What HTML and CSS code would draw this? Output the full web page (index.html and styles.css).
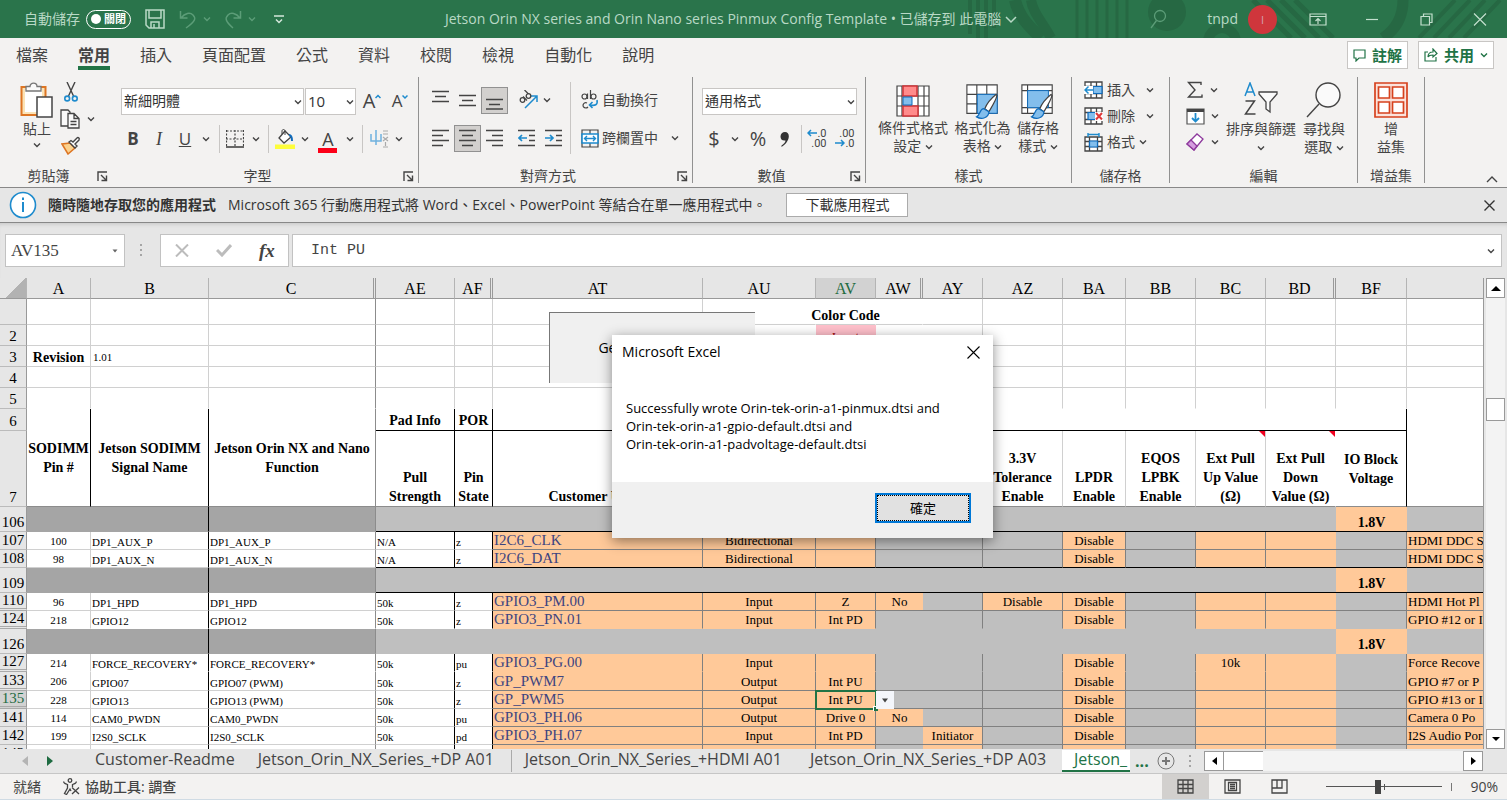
FILE: index.html
```html
<!DOCTYPE html>
<html lang="zh-Hant">
<head>
  <meta charset="UTF-8" />
  <meta name="viewport" content="width=device-width, initial-scale=1.0"/>
  <title>Jetson Orin NX series and Orin Nano series Pinmux Config Template</title>
  <link rel="stylesheet" href="styles.css">
</head>
<body>

<svg class="sprite" aria-hidden="true">
  <symbol id="chev" viewBox="0 0 8 8"><path d="M1 2.5l3 3 3-3" fill="none" stroke="currentColor" stroke-width="1.4"/></symbol>
  <symbol id="launch" viewBox="0 0 11 11"><path d="M1 10V1h9M4 4l5 5M9.5 4.500v5h-5" fill="none" stroke="#444" stroke-width="1.4"/></symbol>
  <symbol id="brush" viewBox="0 0 22 26"><path d="M20 1C15 5 11 10 9 15l4 3C16 13 20 7 21 2z" fill="#fff" stroke="#444" stroke-width="1.2"/><path d="M8 15c-4 0-3 6-7 8 5 3 12 1 12-5z" fill="#83beec" stroke="#0f6cbd" stroke-width="1.2"/></symbol>
</svg>

<header class="titlebar">
  <svg class="deco" width="542" height="38" viewBox="0 0 542 38" aria-hidden="true">
    <g fill="none" stroke="#266843">
      <path d="M5 0v34M13 0v38M21 0v38M29 0v28" stroke-width="4"/>
      <path d="M50 0c4 18 16 28 26 38" stroke-width="12"/>
      <path d="M66 0c2 14 12 22 20 38" stroke-width="10"/>
      <path d="M112 0v38M122 0v38M132 0v38M142 0v38M152 0v38M162 0v38" stroke-width="3"/>
      <circle cx="257" cy="42" r="14" stroke-width="10"/>
      <path d="M288 0l38 38M302 0l38 38M316 0l38 38M330 0l38 38" stroke-width="5"/>
      <path d="M438 0c0 18-8 30-20 38" stroke-width="11"/>
      <path d="M490 0l-36 38M505 0l-36 38M520 0l-36 38M535 0l-36 38" stroke-width="4"/>
    </g>
    <circle cx="202" cy="12" r="19" fill="#266843"/>
  </svg>
  <span class="autosave-label">自動儲存</span>
  <button class="autosave" role="switch" aria-checked="false"><i></i>關閉</button>
  <button class="tb save" aria-label="儲存"><svg width="20" height="20" viewBox="0 0 20 20" fill="none" stroke="#b9d9c6" stroke-width="1.5"><path d="M1 1h18v18H4l-3-3zM4 1v8h12V1M6 19v-6h8v6M9 15v4"/></svg></button>
  <button class="tb undo" aria-label="復原"><svg width="18" height="19" viewBox="0 0 18 19" fill="none" stroke="#5c9d78" stroke-width="1.5"><path d="M1.500 1v7h7M2 8c4-5 9-6 12-3s3 6-7 13"/></svg><svg class="chev"><use href="#chev"/></svg></button>
  <button class="tb redo" aria-label="重做"><svg width="18" height="19" viewBox="0 0 18 19" fill="none" stroke="#5c9d78" stroke-width="1.5"><path d="M16.500 1v7h-7M16 8c-4-5-9-6-12-3s-3 6 5 13"/></svg><svg class="chev"><use href="#chev"/></svg></button>
  <button class="tb" aria-label="自訂"><svg width="10" height="9" viewBox="0 0 10 9" fill="none" stroke="#d5e8dc" stroke-width="1.500"><path d="M0 1h10M2 4.500l3 3 3-3"/></svg></button>
  <h1>Jetson Orin NX series and Orin Nano series Pinmux Config Template • 已儲存到 此電腦 <svg width="12" height="8" viewBox="0 0 12 8" fill="none" stroke="#b9d9c6" stroke-width="1.5"><path d="M1 1l5 5 5-5"/></svg></h1>
  <div class="account">
    <svg class="search" width="17" height="21" viewBox="0 0 17 21" fill="none" stroke="#5c9d78" stroke-width="1.300"><circle cx="10" cy="7" r="5.500"/><path d="M6.500 11.500L1 19"/></svg>
    <span>tnpd</span>
    <span class="avatar">I</span>
  </div>
  <div class="window-buttons">
    <button aria-label="功能區顯示選項"><svg width="18" height="13" viewBox="0 0 18 13"><path d="M1 1h16v11H1zM1 3.500h16M9 11V6M6.500 8L9 5.500 11.500 8"/></svg></button>
    <button aria-label="最小化"><svg width="14" height="13" viewBox="0 0 14 13"><path d="M1 6.500h12"/></svg></button>
    <button aria-label="還原"><svg width="13" height="13" viewBox="0 0 13 13"><path d="M1 3.500h8.500V12H1zM3.500 3.500V1H12v8.500H9.500"/></svg></button>
    <button aria-label="關閉視窗"><svg width="14" height="13" viewBox="0 0 14 13"><path d="M1 .5l12 12M13 .5l-12 12"/></svg></button>
  </div>
</header>

<nav class="tabs">
  <a href="#">檔案</a>
  <a href="#" class="active">常用</a>
  <a href="#">插入</a>
  <a href="#">頁面配置</a>
  <a href="#">公式</a>
  <a href="#">資料</a>
  <a href="#">校閱</a>
  <a href="#">檢視</a>
  <a href="#">自動化</a>
  <a href="#">說明</a>
  <div class="tab-actions">
    <button><svg width="13" height="13" viewBox="0 0 13 13" fill="none" stroke="#217346" stroke-width="1.200"><path d="M1 1h11v8H6l-3 3V9H1z"/></svg>註解</button>
    <button><svg width="14" height="14" viewBox="0 0 14 14" fill="none" stroke="#217346" stroke-width="1.200"><path d="M4 4H1v9h11V9M4 9c0-4 3-5 5-5V1l4 4.500L9 9V7C7 7 5 7 4 9z"/></svg>共用<svg class="chev"><use href="#chev"/></svg></button>
  </div>
</nav>

<section class="ribbon">
  <div class="group clip">
    <div class="body">
      <button class="big"><svg width="34" height="36" viewBox="0 0 34 36"><path d="M1.500 5h24v28h-24z" fill="#fbe3b6" stroke="#dd7523" stroke-width="2"/><path d="M5 8h17v22H5z" fill="#fff"/><path d="M6 9V4.500h4C10 0 17 0 17 4.500h4V9z" fill="#fafafa" stroke="#777" stroke-width="1.300"/><path d="M17 15h15v20H17z" fill="#fff" stroke="#444" stroke-width="1.500"/></svg><span>貼上</span><svg class="chev"><use href="#chev"/></svg></button>
      <div class="stack">
        <button aria-label="剪下"><svg width="14" height="20" viewBox="0 0 14 20" fill="none"><path d="M3 0l6.500 14M11 0L4.500 14" stroke="#444" stroke-width="1.400"/><circle cx="3.200" cy="16.500" r="2.400" stroke="#1e8bcd" stroke-width="1.600"/><circle cx="10.800" cy="16.500" r="2.400" stroke="#1e8bcd" stroke-width="1.600"/></svg></button>
        <button aria-label="複製" class="wide"><svg width="20" height="20" viewBox="0 0 20 20" fill="#fafafa" stroke="#444" stroke-width="1.300"><path d="M1 1h7l2 2v14H1z"/><path d="M8 4.500h6l5 5V19H8zM14 4.500v5h5M10.500 12.500h6M10.500 15.500h6"/></svg><svg class="chev"><use href="#chev"/></svg></button>
        <button aria-label="複製格式"><svg width="20" height="19" viewBox="0 0 20 19"><path d="M1 8l6 10 7-6-5-5z" fill="#fcd28d" stroke="#dd7523" stroke-width="1.500"/><path d="M8 6l6 6 2-2-2-2 4-4c1-2-1-3-2-2l-4 4-2-1.500z" fill="#fff" stroke="#444" stroke-width="1.400"/></svg></button>
      </div>
    </div>
    <div class="caption"><span>剪貼簿</span><svg width="11" height="11"><use href="#launch"/></svg></div>
  </div>

  <div class="group font">
    <div class="body">
      <div class="row combos">
        <label class="combo"><select aria-label="字型"><option>新細明體</option></select><svg class="chev"><use href="#chev"/></svg></label>
        <label class="combo num"><select aria-label="字型大小"><option>10</option></select><svg class="chev"><use href="#chev"/></svg></label>
        <button class="grow" aria-label="放大字型"><b>A</b><svg width="6" height="14" viewBox="0 0 6 14" fill="none" stroke="#1e8bcd" stroke-width="1.500"><path d="M.5 4L3 1.500 5.500 4"/></svg></button>
        <button class="shrink" aria-label="縮小字型"><b>A</b><svg width="6" height="14" viewBox="0 0 6 14" fill="none" stroke="#1e8bcd" stroke-width="1.500"><path d="M.5 1.500L3 4l2.500-2.500"/></svg></button>
      </div>
      <div class="row format">
        <button><strong>B</strong></button>
        <button><em>I</em></button>
        <button><u>U</u></button>
        <svg class="chev"><use href="#chev"/></svg>
        <hr>
        <button aria-label="框線"><svg width="18" height="18" viewBox="0 0 18 18" fill="none" stroke="#444"><path d="M.5 1h17M.5 0v17M17.500 0v17M9 0v17M0 9h18" stroke-dasharray="2 1.500" stroke-width="1.200"/><path d="M0 17h18" stroke-width="1.600"/></svg></button>
        <svg class="chev"><use href="#chev"/></svg>
        <hr>
        <button aria-label="填滿色彩"><svg width="20" height="20" viewBox="0 0 20 20"><path d="M10 2L4 9l5 5 7-6z" fill="#fff" stroke="#444" stroke-width="1.300"/><path d="M7 5V2c0-2 3-2 3 0v4" fill="none" stroke="#444"/><path d="M14 6c3 0 3 3 3 6" fill="none" stroke="#0f6cbd" stroke-width="2"/><path d="M0 15.500h20V20H0z" fill="#fdfd3c"/></svg></button>
        <svg class="chev"><use href="#chev"/></svg>
        <button class="color" aria-label="字型色彩">A<i></i></button>
        <svg class="chev"><use href="#chev"/></svg>
        <hr>
        <button aria-label="注音標示"><svg width="19" height="18" viewBox="0 0 19 18" fill="none"><path d="M1 4v7h10V4M6 0v15" stroke="#6fb1de" stroke-width="1.500"/><path d="M13 1h5M13 4h5M13 7l5 4M18 7l-5 4M15.500 12v4M13 17h5" stroke="#aaa" stroke-width="1.200"/></svg></button>
        <svg class="chev"><use href="#chev"/></svg>
      </div>
    </div>
    <div class="caption"><span>字型</span><svg width="11" height="11"><use href="#launch"/></svg></div>
  </div>

  <div class="group align">
    <div class="body">
      <div class="cols">
        <div class="row aligns">
          <button aria-label="靠上對齊"><svg class="lines" viewBox="0 0 17 20"><path d="M0 1.500h17M3 6.500h11M0 11.500h17"/></svg></button>
          <button aria-label="置中對齊"><svg class="lines" viewBox="0 0 17 20"><path d="M0 5.500h17M3 10.500h11M0 15.500h17"/></svg></button>
          <button class="on" aria-label="靠下對齊"><svg class="lines" viewBox="0 0 17 20"><path d="M0 9.500h17M3 14.500h11M0 19h17"/></svg></button>
          <button class="orient" aria-label="方向"><svg width="20" height="20" viewBox="0 0 20 20" fill="none"><path d="M6 18L18 6M12 6h6v6" stroke="#1e8bcd" stroke-width="1.500"/><g stroke="#444" stroke-width="1.300"><circle cx="3.500" cy="10" r="2.300"/><path d="M4 6.500l4 4"/><circle cx="9.500" cy="6" r="2.300"/><path d="M5.500 0l4 4"/></g></svg><svg class="chev"><use href="#chev"/></svg></button>
        </div>
        <div class="row aligns">
          <button aria-label="靠左對齊"><svg class="lines" viewBox="0 0 17 20"><path d="M0 2.500h17M0 7.500h11M0 12.500h17M0 17.500h11"/></svg></button>
          <button class="on" aria-label="水平置中"><svg class="lines" viewBox="0 0 17 20"><path d="M0 2.500h17M3 7.500h11M0 12.500h17M3 17.500h11"/></svg></button>
          <button aria-label="靠右對齊"><svg class="lines" viewBox="0 0 17 20"><path d="M0 2.500h17M6 7.500h11M0 12.500h17M6 17.500h11"/></svg></button>
          <button aria-label="減少縮排"><svg class="lines" viewBox="0 0 17 20"><path d="M0 2.500h17M11 7.500h6M11 12.500h6M0 17.500h17"/><path class="blue" d="M9 10H1M4 7l-3 3 3 3"/></svg></button>
          <button aria-label="增加縮排"><svg class="lines" viewBox="0 0 17 20"><path d="M0 2.500h17M11 7.500h6M11 12.500h6M0 17.500h17"/><path class="blue" d="M0 10h8M5 7l3 3-3 3"/></svg></button>
        </div>
      </div>
      <hr>
      <div class="cols wraps">
        <button><svg width="18" height="20" viewBox="0 0 18 20" fill="none" stroke="#444" stroke-width="1.200"><circle cx="3.500" cy="6.500" r="2.500"/><path d="M6.500 3.500V9M9.500 0v9"/><circle cx="12.500" cy="6.500" r="2.500"/><path d="M6 13c-4-2-6 5-1 5 1 0 1 0 2-1"/><path d="M16 10c1 5-2 6-7 5M11.500 12L8.500 15l3 3" stroke="#1e8bcd" stroke-width="1.600"/></svg>自動換行</button>
        <button><svg width="18" height="19" viewBox="0 0 18 19" fill="none"><path d="M1 1h16v17H1zM9 1v4M9 14v4" stroke="#444" stroke-width="1.200"/><path d="M1 5h16v9H1z" fill="#fff" stroke="#1e8bcd" stroke-width="1.600"/><path d="M3.500 9.500h11M6 7L3.500 9.500 6 12M12 7l2.500 2.500L12 12" stroke="#1e8bcd" stroke-width="1.400"/></svg>跨欄置中<svg class="chev"><use href="#chev"/></svg></button>
      </div>
    </div>
    <div class="caption"><span>對齊方式</span><svg width="11" height="11"><use href="#launch"/></svg></div>
  </div>

  <div class="group number">
    <div class="body">
      <div class="row combos">
        <label class="combo"><select aria-label="數值格式"><option>通用格式</option></select><svg class="chev"><use href="#chev"/></svg></label>
      </div>
      <div class="row numfmt">
        <button>$</button>
        <svg class="chev"><use href="#chev"/></svg>
        <button>%</button>
        <button aria-label="千分位"><svg width="10" height="17" viewBox="0 0 10 17" fill="#333"><path d="M5 1c6 0 5 10-3.500 15v-1.500C4 13 5.500 11 5.500 9.500 2 10 .5 8 .5 5.500.5 3 2.500 1 5 1z"/></svg></button>
        <hr>
        <button class="dec" aria-label="增加小數位數"><span><svg width="10" height="8" viewBox="0 0 10 8"><path d="M10 4H1M4 1L1 4l3 3"/></svg>.0</span><span>.00</span></button>
        <button class="dec" aria-label="減少小數位數"><span>.00</span><span><svg width="10" height="8" viewBox="0 0 10 8"><path d="M0 4h9M6 1l3 3-3 3"/></svg>.0</span></button>
      </div>
    </div>
    <div class="caption"><span>數值</span><svg width="11" height="11"><use href="#launch"/></svg></div>
  </div>

  <div class="group styles">
    <div class="body">
      <button class="big"><svg width="34" height="34" viewBox="0 0 34 34"><path d="M1 2h32v30H1zM1 12h32M1 22h32M6 2v30M22 2v30M28 2v30" fill="#fff" stroke="#444" stroke-width="1.200"/><path d="M7 2h14v10H7zM7 22h15v10H7z" fill="#ff8b8b" stroke="#d13438" stroke-width="1.500"/><path d="M7 13h9v8H7z" fill="#83beec" stroke="#0f6cbd"/></svg><span>條件式格式<br>設定 <svg class="chev"><use href="#chev"/></svg></span></button>
      <button class="big"><svg width="36" height="38" viewBox="0 0 36 38"><path d="M1 2h32v30H1zM1 12h32M1 22h32M11.500 2v30M22 2v30" fill="#fff" stroke="#444" stroke-width="1.200"/><path d="M12 12h21v20H12z" fill="#83beec" stroke="#0f6cbd"/><use href="#brush" x="9" y="11" width="26" height="28"/></svg><span>格式化為<br>表格 <svg class="chev"><use href="#chev"/></svg></span></button>
      <button class="big"><svg width="36" height="38" viewBox="0 0 36 38"><path d="M1 2h32v30H1zM1 8h32M1 26h32M7 2v30" fill="#fff" stroke="#444" stroke-width="1.200"/><path d="M7 8h22v18H7z" fill="#83beec" stroke="#0f6cbd"/><use href="#brush" x="9" y="11" width="26" height="28"/></svg><span>儲存格<br>樣式 <svg class="chev"><use href="#chev"/></svg></span></button>
    </div>
    <div class="caption"><span>樣式</span></div>
  </div>

  <div class="group cells">
    <div class="body">
      <button><svg width="19" height="18" viewBox="0 0 19 18"><path d="M1 1h17v16H1zM1 5.500h17M1 12.500h17M7 1v16M12.500 1v16" fill="#fff" stroke="#444" stroke-width="1.300"/><path d="M9 5.500h9v7H9z" fill="#83beec" stroke="#0f6cbd" stroke-width="1.200"/><path d="M0 5h9v8H0z" fill="#fff"/><path d="M9 9H1M4.500 5.500L1 9l3.500 3.500" fill="none" stroke="#1e8bcd" stroke-width="1.500"/></svg><span>插入</span><svg class="chev"><use href="#chev"/></svg></button>
      <button><svg width="19" height="18" viewBox="0 0 19 18"><path d="M1 1h17v16H1zM1 5.500h17M1 12.500h17M7 1v16M12.500 1v16" fill="#fff" stroke="#444" stroke-width="1.300"/><path d="M4 5.500h8v7H4z" fill="#83beec" stroke="#0f6cbd" stroke-width="1.200"/><path d="M11 5h8v9h-8z" fill="#fff"/><path d="M12 6l6 6.500M18 6l-6 6.500" stroke="#e03a3a" stroke-width="2"/></svg><span>刪除</span><svg class="chev"><use href="#chev"/></svg></button>
      <button><svg width="19" height="19" viewBox="0 0 19 19"><path d="M1 4h17v14H1zM1 8.500h17M1 13.500h17M5.500 4v14M13.500 4v14" fill="#fff" stroke="#444" stroke-width="1.300"/><path d="M5.500 8h8v6h-8z" fill="#83beec" stroke="#0f6cbd" stroke-width="1.200"/><path d="M4 0v4M15 0v4M4 1.500h11" fill="none" stroke="#1e8bcd" stroke-width="1.400"/></svg><span>格式</span><svg class="chev near"><use href="#chev"/></svg></button>
    </div>
    <div class="caption"><span>儲存格</span></div>
  </div>

  <div class="group editing">
    <div class="body">
      <div class="stack">
        <button aria-label="加總"><svg width="18" height="18" viewBox="0 0 18 18" fill="none" stroke="#444" stroke-width="1.400"><path d="M15 4V1.500H2.500L9 9l-6.500 7H16v-2.500"/></svg><svg class="chev"><use href="#chev"/></svg></button>
        <button aria-label="填滿"><svg width="19" height="17" viewBox="0 0 19 17" fill="none"><path d="M1 1h17v15H1z" fill="#fff" stroke="#555" stroke-width="1.200"/><path d="M1 2.500h17" stroke="#444" stroke-width="3"/><path d="M9.500 5v8M6 10l3.500 3.500L13 10" stroke="#1e8bcd" stroke-width="1.800"/></svg><svg class="chev"><use href="#chev"/></svg></button>
        <button aria-label="清除"><svg width="19" height="18" viewBox="0 0 19 18" stroke="#8e3a9d" stroke-width="1.300"><path d="M1 11L11 1l6 5L8 17z" fill="#fff"/><path d="M1 11l4-4 6 6-3 4z" fill="#d59ddf"/></svg><svg class="chev"><use href="#chev"/></svg></button>
      </div>
      <button class="big"><svg width="34" height="36" viewBox="0 0 34 36" fill="none" stroke-width="1.500"><path d="M1 14L6 1l5 13M3 10h6" stroke="#1e8bcd"/><path d="M1.500 19h9l-9 13h10" stroke="#444"/><path d="M15 10h18v2l-7 8v10l-4-3v-7l-7-8z" fill="#fafafa" stroke="#444" stroke-width="1.300"/></svg><span>排序與篩選<br><svg class="chev"><use href="#chev"/></svg></span></button>
      <button class="big"><svg width="36" height="36" viewBox="0 0 36 36" fill="#fafafa" stroke="#444" stroke-width="1.400"><circle cx="22" cy="13" r="12"/><path d="M13 22L1 35"/></svg><span>尋找與<br>選取 <svg class="chev"><use href="#chev"/></svg></span></button>
    </div>
    <div class="caption"><span>編輯</span></div>
  </div>

  <div class="group addins">
    <div class="body">
      <button class="big"><svg width="34" height="36" viewBox="0 0 34 36" fill="#fff" stroke="#d6421e" stroke-width="1.700"><path d="M1 1h32v34H1z" fill="#fbe3dc"/><path d="M4.500 5h11v11h-11zM18.500 5h11v11h-11zM4.500 20h11v11h-11zM18.500 20h11v11h-11z"/></svg><span>增<br>益集</span></button>
    </div>
    <div class="caption"><span>增益集</span></div>
  </div>
  <button class="collapse" aria-label="摺疊功能區"><svg width="12" height="8" viewBox="0 0 12 8" fill="none" stroke="#444" stroke-width="1.400"><path d="M1 7l5-5 5 5"/></svg></button>
</section>

<div class="message">
  <svg width="28" height="28" viewBox="0 0 28 28"><circle cx="14" cy="14" r="12.500" fill="#fff" stroke="#1e8bcd" stroke-width="1.600"/><path d="M14 11v10M14 6.500v2.500" stroke="#1e8bcd" stroke-width="2"/></svg>
  <strong>隨時隨地存取您的應用程式</strong>
  <span>Microsoft 365 行動應用程式將 Word、Excel、PowerPoint 等結合在單一應用程式中。</span>
  <button class="download">下載應用程式</button>
  <button class="close" aria-label="關閉訊息"><svg width="11" height="11" viewBox="0 0 11 11" stroke="#333" stroke-width="1.400"><path d="M.5.5l10 10M10.500.5l-10 10"/></svg></button>
</div>

<div class="formula-bar">
  <div class="name-box"><input type="text" aria-label="名稱方塊" value="AV135"><svg width="6" height="4" viewBox="0 0 6 4"><path d="M.5.5h5L3 3.500z" fill="#666"/></svg></div>
  <svg class="grip" width="3" height="13" viewBox="0 0 3 13" fill="#a5a5a5"><path d="M0 0h2v2H0zM0 5h2v2H0zM0 10h2v2H0z"/></svg>
  <div class="fx">
    <button aria-label="取消"><svg width="14" height="13" viewBox="0 0 14 13" stroke="#bcbcbc" stroke-width="2"><path d="M1 .5l12 12M13 .5l-12 12"/></svg></button>
    <button aria-label="輸入"><svg width="16" height="13" viewBox="0 0 16 13" fill="none" stroke="#bcbcbc" stroke-width="3"><path d="M1 6l5 5 9-10"/></svg></button>
    <button class="fn">fx</button>
  </div>
  <div class="formula"><input type="text" aria-label="資料編輯列" value="Int PU"><svg class="chev"><use href="#chev"/></svg></div>
</div>

<main class="workbook">
  <div class="sheet">
    <table>
      <colgroup>
        <col class="w-row"><col class="w-a"><col class="w-b"><col class="w-c"><col class="w-ae"><col class="w-af"><col class="w-at"><col class="w-au"><col class="w-av"><col class="w-aw"><col class="w-av"><col class="w-az"><col class="w-ba"><col class="w-bb"><col class="w-bb"><col class="w-bb"><col class="w-bf"><col>
      </colgroup>
      <thead>
        <tr><th class="corner"></th><th>A</th><th>B</th><th class="skip">C</th><th>AE</th><th class="skip">AF</th><th>AT</th><th>AU</th><th class="sel">AV</th><th class="skip">AW</th><th>AY</th><th>AZ</th><th>BA</th><th>BB</th><th>BC</th><th class="skip">BD</th><th>BF</th><th></th></tr>
      </thead>
      <tbody>
        <tr class="first"><th></th><td></td><td></td><td></td><td></td><td></td><td></td><td class="nb"></td><td class="nb title"><div>Color Code</div></td><td class="nb"></td><td></td><td></td><td></td><td></td><td></td><td></td><td></td><td></td></tr>
        <tr class="free"><th>2</th><td></td><td></td><td></td><td></td><td></td><td></td><td class="nb"></td><td class="nb pink">Input</td><td class="nb"></td><td></td><td></td><td></td><td></td><td></td><td></td><td></td><td></td></tr>
        <tr class="free"><th>3</th><td class="rev">Revision</td><td class="ver">1.01</td><td></td><td></td><td></td><td></td><td></td><td></td><td></td><td></td><td></td><td></td><td></td><td></td><td></td><td></td><td></td></tr>
        <tr class="free"><th>4</th><td></td><td></td><td></td><td></td><td></td><td></td><td></td><td></td><td></td><td></td><td></td><td></td><td></td><td></td><td></td><td></td><td></td></tr>
        <tr class="free last"><th>5</th><td></td><td></td><td></td><td></td><td></td><td></td><td></td><td></td><td></td><td></td><td></td><td></td><td></td><td></td><td></td><td></td><td></td></tr>
        <tr class="head6"><th>6</th><td rowspan="2" class="mid">SODIMM<br>Pin #</td><td rowspan="2" class="mid">Jetson SODIMM<br>Signal Name</td><td rowspan="2" class="mid freeze">Jetson Orin NX and Nano<br>Function</td><td class="under">Pad Info</td><td class="under">POR</td><td colspan="11" class="under"></td><td class="nb"></td></tr>
        <tr class="head7"><th>7</th><td class="black">Pull<br>Strength</td><td class="black">Pin<br>State</td><td>Customer Usage</td><td></td><td></td><td></td><td></td><td>3.3V<br>Tolerance<br>Enable</td><td>LPDR<br>Enable</td><td>EQOS<br>LPBK<br>Enable</td><td class="note">Ext Pull<br>Up Value<br>(Ω)</td><td class="note nb">Ext Pull<br>Down<br>Value (Ω)</td><td class="mid black">IO Block<br>Voltage</td><td class="nb"></td></tr>

        <tr class="block ruled"><th>106</th><td colspan="2" class="dark"></td><td class="dark freeze"></td><td colspan="12"></td><td class="volt">1.8V</td><td></td></tr>
        <tr class="pin"><th>107</th><td>100</td><td>DP1_AUX_P</td><td>DP1_AUX_P</td><td>N/A</td><td>z</td><td>I2C6_CLK</td><td>Bidirectional</td><td></td><td></td><td></td><td></td><td>Disable</td><td></td><td></td><td></td><td></td><td>HDMI DDC S</td></tr>
        <tr class="pin ruled"><th>108</th><td>98</td><td>DP1_AUX_N</td><td>DP1_AUX_N</td><td>N/A</td><td>z</td><td>I2C6_DAT</td><td>Bidirectional</td><td></td><td></td><td></td><td></td><td>Disable</td><td></td><td></td><td></td><td></td><td>HDMI DDC S</td></tr>
        <tr class="block ruled"><th>109</th><td colspan="2" class="dark"></td><td class="dark freeze"></td><td colspan="12"></td><td class="volt">1.8V</td><td></td></tr>
        <tr class="pin skip"><th>110</th><td>96</td><td>DP1_HPD</td><td>DP1_HPD</td><td>50k</td><td>z</td><td>GPIO3_PM.00</td><td>Input</td><td>Z</td><td class="on">No</td><td></td><td class="on">Disable</td><td>Disable</td><td></td><td></td><td></td><td></td><td>HDMI Hot Pl</td></tr>
        <tr class="pin skip open"><th>124</th><td>218</td><td>GPIO12</td><td>GPIO12</td><td>50k</td><td>z</td><td>GPIO3_PN.01</td><td>Input</td><td>Int PD</td><td></td><td></td><td></td><td>Disable</td><td></td><td></td><td></td><td></td><td>GPIO #12 or I</td></tr>
        <tr class="block"><th>126</th><td colspan="2" class="dark"></td><td class="dark freeze"></td><td colspan="12"></td><td class="volt">1.8V</td><td></td></tr>
        <tr class="pin skip open"><th>127</th><td>214</td><td>FORCE_RECOVERY*</td><td>FORCE_RECOVERY*</td><td>50k</td><td>pu</td><td>GPIO3_PG.00</td><td>Input</td><td></td><td></td><td></td><td></td><td>Disable</td><td></td><td>10k</td><td></td><td></td><td>Force Recove</td></tr>
        <tr class="pin tall skip"><th>133</th><td>206</td><td>GPIO07</td><td>GPIO07 (PWM)</td><td>50k</td><td>z</td><td>GP_PWM7</td><td>Output</td><td>Int PU</td><td></td><td></td><td></td><td>Disable</td><td></td><td></td><td></td><td></td><td>GPIO #7 or P</td></tr>
        <tr class="pin skip"><th class="sel">135</th><td>228</td><td>GPIO13</td><td>GPIO13 (PWM)</td><td>50k</td><td>z</td><td>GP_PWM5</td><td>Output</td><td class="current">Int PU<i class="handle"></i><button class="drop" aria-label="選擇值"><svg width="6" height="5" viewBox="0 0 6 5"><path d="M0 .5h6L3 4.500z" fill="#444"/></svg></button></td><td></td><td></td><td></td><td>Disable</td><td></td><td></td><td></td><td></td><td>GPIO #13 or I</td></tr>
        <tr class="pin"><th>141</th><td>114</td><td>CAM0_PWDN</td><td>CAM0_PWDN</td><td>50k</td><td>pu</td><td>GPIO3_PH.06</td><td>Output</td><td>Drive 0</td><td class="on">No</td><td></td><td></td><td>Disable</td><td></td><td></td><td></td><td></td><td>Camera 0 Po</td></tr>
        <tr class="pin"><th>142</th><td>199</td><td>I2S0_SCLK</td><td>I2S0_SCLK</td><td>50k</td><td>pd</td><td>GPIO3_PH.07</td><td>Input</td><td>Int PD</td><td></td><td class="on">Initiator</td><td></td><td>Disable</td><td></td><td></td><td></td><td></td><td>I2S Audio Por</td></tr>
        <tr class="pin"><th>143</th><td></td><td></td><td></td><td></td><td></td><td></td><td></td><td></td><td></td><td class="on"></td><td></td><td></td><td></td><td></td><td></td><td></td><td></td></tr>
      </tbody>
    </table>
    <button class="generate">Generate DT File</button>
  </div>
  <div class="vscroll">
    <button aria-label="向上捲動"><svg width="10" height="5" viewBox="0 0 10 5"><path d="M0 5h10L5 0z"/></svg></button>
    <div class="track"><i></i></div>
    <button aria-label="向下捲動"><svg width="8" height="4" viewBox="0 0 8 4"><path d="M0 0h8L4 4z"/></svg></button>
  </div>
</main>

<div class="sheet-tabs">
  <button class="nav off" aria-label="上一張"><svg width="6" height="10" viewBox="0 0 6 10"><path d="M6 0v10L0 5z"/></svg></button>
  <button class="nav" aria-label="下一張"><svg width="6" height="10" viewBox="0 0 6 10"><path d="M0 0v10l6-5z"/></svg></button>
  <a href="#" class="t1">Customer-Readme</a>
  <a href="#" class="t2">Jetson_Orin_NX_Series_+DP A01</a>
  <a href="#" class="t3">Jetson_Orin_NX_Series_+HDMI A01</a>
  <a href="#" class="t4">Jetson_Orin_NX_Series_+DP A03</a>
  <a href="#" class="active">Jetson_</a>
  <span class="more">...</span>
  <button class="add" aria-label="新工作表"><svg width="18" height="18" viewBox="0 0 18 18" fill="none" stroke="#777"><circle cx="9" cy="9" r="8"/><path d="M9 5v8M5 9h8" stroke-width="2"/></svg></button>
  <svg class="grip" width="3" height="13" viewBox="0 0 3 13" fill="#a5a5a5"><path d="M0 0h2v2H0zM0 5h2v2H0zM0 10h2v2H0z"/></svg>
  <div class="hscroll">
    <button aria-label="向左捲動"><svg width="5" height="8" viewBox="0 0 5 8"><path d="M5 0v8L0 4z"/></svg></button>
    <i></i>
    <button aria-label="向右捲動"><svg width="5" height="8" viewBox="0 0 5 8"><path d="M0 0v8l5-4z"/></svg></button>
  </div>
</div>

<footer class="status">
  <span>就緒</span>
  <svg width="17" height="17" viewBox="0 0 17 17" fill="none" stroke="#444" stroke-width="1.300"><circle cx="7" cy="2.500" r="1.800"/><path d="M1 3.500C0 5 3 6 4.500 6.500V10l-3 5.500 2 1L7 11l1 2M13 3.500c1 1.500-2 2.500-3.500 3V9"/><path d="M9 9.500l7 6.500M16 9.500L9 16"/></svg>
  <strong>協助工具: 調查</strong>
  <div class="views">
    <button class="on" aria-label="標準模式"><svg width="17" height="15" viewBox="0 0 17 15"><path d="M1 1h15v13H1zM1 5.500h15M1 9.500h15M6 1v13M11 1v13"/></svg></button>
    <button aria-label="整頁模式"><svg width="17" height="15" viewBox="0 0 17 15"><path d="M1 1h15v13H1zM4.500 3.500h8v8h-8zM6 5.500h5M6 7.500h5M6 9.500h5"/></svg></button>
    <button aria-label="分頁預覽"><svg width="17" height="15" viewBox="0 0 17 15"><path d="M1 1h15v13H1zM1 9h10V1M6 1v8"/></svg></button>
  </div>
  <input type="range" min="0" max="100" value="44" aria-label="縮放">
  <i class="plus"></i>
  <span class="zoom">90%</span>
</footer>

<dialog open class="msgbox" aria-labelledby="msgTitle">
  <div class="msg-title"><span id="msgTitle">Microsoft Excel</span><button aria-label="關閉對話框"><svg width="13" height="13" viewBox="0 0 13 13" stroke="#000" stroke-width="1.100"><path d="M.5.5l12 12M12.500.5l-12 12"/></svg></button></div>
  <p>Successfully wrote Orin-tek-orin-a1-pinmux.dtsi and<br>Orin-tek-orin-a1-gpio-default.dtsi and<br>Orin-tek-orin-a1-padvoltage-default.dtsi</p>
  <div class="msg-foot"><button class="ok">確定</button></div>
</dialog>

</body>
</html>
```
FILE: styles.css
```css
* {
  box-sizing: border-box;
}

body {
  margin: 0;
  height: 100vh;
  display: flex;
  flex-direction: column;
  overflow: hidden;
  background: #e6e6e6;
  color: #444;
  font: 14px/18px "Open Sans", "Noto Sans CJK TC", sans-serif;
}

button {
  display: flex;
  align-items: center;
  justify-content: center;
  padding: 0;
  border: none;
  background: none;
  color: inherit;
  font: inherit;
}

a {
  color: inherit;
  text-decoration: none;
  white-space: nowrap;
}

svg { flex: none; }
i { font-style: normal; }

.sprite {
  position: absolute;
  width: 0;
  height: 0;
}

.chev {
  width: 8px;
  height: 8px;
}

hr {
  width: 1px;
  margin: 0;
  border: none;
  background: #c8c6c4;
  justify-self: center;
  align-self: stretch;
}

/* Title bar */
.titlebar {
  position: relative;
  flex: none;
  display: flex;
  align-items: center;
  height: 38px;
  padding-left: 24px;
  background: #2a744b;
  color: #b9d9c6;
}

.titlebar > * { position: relative; }

.titlebar .deco {
  position: absolute;
  right: 0;
  top: 0;
}

.autosave-label { width: 62px; }

.autosave {
  width: 45px;
  height: 19px;
  gap: 3px;
  margin-right: 14px;
  border: 1px solid #fff;
  border-radius: 10px;
  color: #fff;
  font-size: 11px;
  font-weight: bold;
}

.autosave i {
  width: 10px;
  height: 10px;
  border-radius: 50%;
  background: #fff;
}

.tb { gap: 6px; margin-right: 14px; }
.tb.undo, .tb.redo { color: #5c9d78; margin-right: 13px; }
.tb.redo { margin-right: 18px; }

.titlebar h1 {
  position: absolute;
  left: 445px;
  margin: 0;
  font-size: 14px;
  font-weight: normal;
  white-space: nowrap;
}

.account {
  display: flex;
  align-items: center;
  margin-left: auto;
}

.account .search { margin-right: 40px; }

.avatar {
  width: 29px;
  height: 29px;
  margin: 0 14px 0 10px;
  border-radius: 50%;
  background: #cf363c;
  color: #d5a0b0;
  font-size: 11px;
  line-height: 29px;
  text-align: center;
}

.window-buttons { display: flex; }
.window-buttons button { width: 54px; }

.window-buttons svg {
  fill: none;
  stroke: #c3dfce;
  stroke-width: 1.2;
}

/* Ribbon tabs */
.tabs {
  flex: none;
  display: flex;
  gap: 30px;
  height: 34px;
  padding-left: 16px;
  background: #f3f2f1;
  font-size: 16px;
}

.tabs a {
  height: 32px;
  line-height: 34px;
}

.tabs .active {
  border-bottom: 4px solid #217346;
  font-weight: bold;
}

.tab-actions {
  display: flex;
  gap: 10px;
  margin-left: auto;
  padding: 3px 13px 3px 0;
}

.tab-actions button {
  gap: 6px;
  height: 28px;
  padding: 0 5px;
  border: 1px solid #c8c6c4;
  background: #fff;
  color: #217346;
  font-size: 15px;
  font-weight: bold;
}

/* Ribbon */
.ribbon {
  flex: none;
  display: flex;
  position: relative;
  padding: 5px 0 4px;
  background: #f3f2f1;
  border-bottom: 1px solid #888;
}

.group {
  display: flex;
  flex-direction: column;
  height: 106px;
  border-right: 1px solid #919191;
}

.group .body { height: 92px; }

.caption {
  display: flex;
  align-items: center;
  height: 14px;
}

.caption span {
  flex: 1;
  text-align: center;
}

.caption svg { margin-right: 4px; }

.clip { width: 112px; border-right: none; }
.font { width: 307px; }
.align { width: 274px; }
.number { width: 173px; }
.styles { width: 206px; }
.cells { width: 98px; }
.editing { width: 188px; }
.addins { width: 67px; }

.big {
  flex-direction: column;
  justify-content: flex-start;
  line-height: 18px;
}

.big > svg:first-child { margin-bottom: 2px; }

.clip .body {
  display: flex;
  padding: 5px 0 0 18px;
}

.clip .big { width: 38px; }
.clip .big .chev { margin-top: 3px; }

.clip .stack {
  display: grid;
  grid-template-rows: repeat(3, 27px);
  justify-items: start;
  margin: -4px 0 0 4px;
}

.clip .stack button { width: 22px; }
.clip .stack .wide { width: 34px; gap: 7px; }

.row {
  display: grid;
  align-items: center;
  height: 28px;
}

.row + .row { margin-top: 10px; }

.font .body, .number .body { padding: 10px 9px 0; }
.font .combos { grid-template-columns: 183px 51px 30px 24px; column-gap: 1px; }
.font .format { grid-template-columns: 24px 28px 24px 18px 8px 23px 20px 5px 27px 14px 32px 12px 12px 22px 18px; }
.number .combos { grid-template-columns: 155px; }
.number .numfmt { grid-template-columns: 24px 18px 28px 26px 6px 26px 30px; }
.format .chev, .numfmt .chev { justify-self: center; }
.format { font-size: 17px; }
.format em { font-family: "Liberation Serif", serif; font-size: 18px; }

.combo {
  position: relative;
  display: flex;
}

.combo select {
  appearance: none;
  width: 100%;
  height: 27px;
  padding: 0 2px;
  border: 1px solid #c8c6c4;
  border-radius: 0;
  background: #fff;
  color: #333;
  font: inherit;
}

.combo .chev {
  position: absolute;
  right: 2px;
  top: 10px;
}

.combo.num select { font-size: 15px; }

.grow, .shrink { font-size: 20px; }
.grow b, .shrink b { font-weight: normal; }
.shrink { font-size: 17px; }

.color {
  position: relative;
  font-size: 18px;
}

.color i {
  position: absolute;
  left: 6px;
  right: 7px;
  bottom: -5px;
  height: 5px;
  background: #fc0018;
}

.align .body {
  display: flex;
  padding: 9px 0 0 8px;
}

.align hr { height: 72px; margin: -4px 10px 0 8px; }
.aligns { grid-template-columns: 27px 27px 27px 37px 17px; }
.aligns button { height: 27px; }
.aligns .orient { grid-column: 4 / 6; gap: 4px; }

.aligns .on {
  background: #d2d0ce;
  border: 1px solid #919191;
}

.lines {
  width: 17px;
  height: 20px;
  fill: none;
  stroke: #444;
  stroke-width: 1.4;
}

.lines .blue { stroke: #1e8bcd; stroke-width: 1.7; }

.wraps button {
  gap: 3px;
  height: 28px;
}

.wraps button + button { margin-top: 10px; }
.wraps .chev { margin-left: 10px; }

.numfmt { font-size: 20px; }

.numfmt .dec {
  flex-direction: column;
  align-items: flex-end;
  justify-self: center;
  font: 11px/10px Roboto, sans-serif;
}

.dec svg {
  fill: none;
  stroke: #1e8bcd;
  stroke-width: 1.5;
}

.styles .body {
  display: grid;
  grid-template-columns: 76px 63px 48px;
  padding: 6px 0 0 9px;
}

.styles .big > svg:first-child { height: 36px; margin-bottom: 0; }

.cells .body {
  display: grid;
  grid-template-rows: repeat(3, 26px);
  justify-items: start;
  padding: 0 0 0 12px;
}

.cells .body button { gap: 4px; }
.cells .body .chev { margin-left: 7px; }
.cells .body .near { margin-left: 0; }

.editing .body {
  display: grid;
  grid-template-columns: 40px 78px 48px;
  padding: 0 0 0 12px;
}

.editing .stack {
  display: grid;
  grid-template-rows: repeat(3, 26px);
}

.editing .stack button { gap: 6px; }
.editing .big, .addins .big { padding-top: 5px; }
.addins .big { width: 100%; }

.ribbon .collapse {
  margin: 98px 9px 0 auto;
  height: 8px;
}

/* Message bar */
.message {
  flex: none;
  display: flex;
  align-items: center;
  height: 35px;
  padding-left: 9px;
  border-bottom: 1px solid #888;
  color: #333;
  white-space: nowrap;
}

.message strong { margin: 0 12px 0 11px; }

.message .download {
  height: 24px;
  padding: 0 18px;
  margin-left: 20px;
  border: 1px solid #ababab;
  background: #fff;
}

.message .close { margin: 0 12px 0 auto; }

/* Formula bar */
.formula-bar {
  flex: none;
  display: flex;
  align-items: center;
  padding: 11px 5px;
  box-shadow: inset 0 4px 4px -3px #c4c4c4;
}

.name-box, .fx, .formula {
  display: flex;
  align-items: center;
  height: 33px;
  border: 1px solid #c2c2c2;
  background: #fff;
}

.name-box {
  width: 120px;
  padding-right: 6px;
}

.formula-bar input {
  flex: 1;
  width: 50px;
  padding: 0 0 0 5px;
  border: none;
  outline: none;
  color: #444;
  font: 17px "Liberation Serif", serif;
}

.formula-bar .grip { margin: 0 17px 0 15px; }

.fx {
  width: 129px;
  margin-right: 3px;
}

.fx button { flex: 1; }
.fx .fn { font: italic bold 19px "Liberation Serif", serif; }

.formula {
  flex: 1;
  padding-right: 6px;
}

.formula-bar .formula input {
  padding-left: 18px;
  font: 15px "Liberation Mono", monospace;
}

/* Sheet */
.workbook {
  flex: 1;
  display: flex;
  min-height: 0;
}

.sheet {
  position: relative;
  flex: 1;
  overflow: hidden;
  border-right: 1px solid #999;
}

.sheet table {
  width: 100%;
  table-layout: fixed;
  border-collapse: separate;
  border-spacing: 0;
  background: #fff;
  color: #000;
  font: 13px/17px "Liberation Serif", serif;
}

.w-row { width: 27px; }
.w-a { width: 64px; }
.w-b { width: 118px; }
.w-c { width: 167px; }
.w-ae { width: 79px; }
.w-af { width: 38px; }
.w-at { width: 210px; }
.w-au { width: 113px; }
.w-av { width: 60px; }
.w-aw { width: 47px; }
.w-az { width: 80px; }
.w-ba { width: 63px; }
.w-bb { width: 70px; }
.w-bf { width: 71px; }

.sheet th, .sheet td {
  padding: 0;
  overflow: hidden;
  white-space: nowrap;
  text-align: center;
  vertical-align: bottom;
}

.sheet th {
  background: #e6e6e6;
  border-right: 1px solid #999;
  border-bottom: 1px solid #bbb;
  font-size: 15px;
  font-weight: normal;
}

.sheet thead th {
  height: 21px;
  border-right-color: #b4b4b4;
  border-bottom-color: #999;
  font-size: 16px;
  line-height: 18px;
}

.sheet thead .skip { border-right: 3px double #999; }
.sheet thead th:last-child { border-right: none; }
.sheet .corner { background: linear-gradient(135deg, #e6e6e6 55%, #b2b2b2 55%); }
.sheet .sel { background: #d2d2d2; color: #1e6b41; }
.sheet .skip > th { border-bottom: 3px double #aaa; line-height: 15px; }

.sheet td {
  border-right: 1px solid #d0d0d0;
  border-bottom: 1px solid #d0d0d0;
}

.sheet tr td:last-child { border-right: none; }
.sheet .nb { border-right-color: transparent; }
.sheet .freeze, .first td:nth-child(4), .free td:nth-child(4), .pin td:nth-child(4) { border-right: 1px solid #8c8c8c; }

.first { height: 26px; }
.free { height: 21px; }
.free.last td { border-bottom-color: transparent; }
.head6 { height: 22px; }
.head7 { height: 76px; }
.block { height: 25px; }
.pin { height: 18px; }
.pin.tall { height: 19px; }

.sheet .title {
  overflow: visible;
  vertical-align: middle;
  font-size: 14px;
  font-weight: bold;
}

.title div {
  display: flex;
  justify-content: center;
  padding-top: 8px;
}

.sheet .pink { background: #ffc0cb; color: #9c0006; }
.sheet .rev { font-size: 14px; font-weight: bold; }
.sheet .ver { padding-left: 2px; font-size: 11px; text-align: left; }

.head6 td, .head7 td {
  position: relative;
  border-bottom: 1px solid #8c8c8c;
  font-size: 14px;
  font-weight: bold;
  line-height: 18px;
}

.head7 td, .head6 td.mid { line-height: 19px; }
.sheet .mid { vertical-align: middle; }
.head6 td { border-right-color: #000; }
.head6 .under { border-bottom-color: #000; }
.head6 td.nb:last-child { border-bottom-color: transparent; }
.sheet .black { border-right-color: #000; }

.note::after {
  content: "";
  position: absolute;
  top: 0;
  right: 0;
  border-top: 6px solid #f00020;
  border-left: 6px solid transparent;
}

.block td {
  border-right: none;
  border-bottom-color: #bfbfbf;
  background: #bfbfbf;
}

.block .dark { background: #a5a5a5; border-bottom-color: #a5a5a5; }
.block .dark:nth-child(2) { border-right: 1px solid #000; }

.sheet .volt {
  background: #ffc999;
  border-bottom-color: #ffc999;
  font-size: 14px;
  font-weight: bold;
}

/* Pin rows: reference columns are white, settings are orange when editable */
.pin td:nth-child(-n+6) { font-size: 11px; line-height: 14px; }
.pin td:nth-child(2) { vertical-align: middle; }
.pin td:nth-child(n+3):nth-child(-n+7), .pin td:last-child { padding-left: 1px; text-align: left; }
.pin td:nth-child(3), .pin td:nth-child(5), .pin td:nth-child(6) { border-right-color: #000; }
.pin td:nth-child(n+7) { background: #bfbfbf; border-color: #808080; }
.pin td:nth-child(7) { color: #3d4480; font-size: 15px; }

.pin td:nth-child(7), .pin td:nth-child(8), .pin td:nth-child(9), .pin td:nth-child(13),
.pin td:nth-child(15), .pin td:nth-child(16), .pin td:nth-child(18), .pin td.on { background: #ffc999; }
.pin td:nth-child(10), .pin td:nth-child(16) { border-right: none; }
.ruled td:nth-child(n+5), .block.ruled td:nth-child(n+4) { border-bottom-color: #000; }
.pin.open td { border-bottom-color: transparent; }

.pin .current {
  position: relative;
  overflow: visible;
  outline: 2px solid #217346;
  outline-offset: -1px;
}

.handle {
  position: absolute;
  right: -3px;
  bottom: -3px;
  width: 5px;
  height: 5px;
  border: 1px solid #fff;
  border-width: 1px 0 0 1px;
  background: #217346;
}

.drop {
  position: absolute;
  left: 60px;
  top: 0;
  width: 18px;
  height: 18px;
  background: #f4f6fb;
}

.generate {
  position: absolute;
  left: 549px;
  top: 34px;
  width: 206px;
  height: 71px;
  border-top: 1px solid #777;
  border-left: 1px solid #777;
  background: #f0f0f0;
  color: #000;
}

/* Scroll bars */
.vscroll {
  display: flex;
  flex-direction: column;
  width: 23px;
  padding: 0 2px;
}

.vscroll button {
  height: 20px;
  border: 1px solid #999;
  background: #fff;
}

.track {
  flex: 1;
  padding-top: 100px;
  background: #f3f3f3;
}

.track i {
  display: block;
  height: 23px;
  border: 1px solid #999;
  background: #fff;
}

/* Sheet tabs */
.sheet-tabs {
  flex: none;
  display: flex;
  align-items: center;
  height: 25px;
  padding: 0 24px 0 22px;
  border-bottom: 1px solid #c6c6c6;
  font-size: 16px;
}

.sheet-tabs a { line-height: 18px; height: 22px; }
.nav { width: 6px; margin-right: 19px; fill: #1e6b41; }
.nav.off { fill: #b4b4b4; }
.t1 { margin-left: 23px; }
.t2 { margin-left: 23px; }
.t3 { margin-left: 17px; padding-left: 13px; border-left: 1px solid #aaa; }
.t4 { margin-left: 28px; }

.sheet-tabs .active {
  width: 68px;
  margin-left: 16px;
  padding-left: 12px;
  overflow: hidden;
  background: #fff;
  border-bottom: 2px solid #217346;
  color: #217346;
}

.more {
  margin-left: 5px;
  color: #217346;
  font-weight: bold;
}

.add { margin-left: 8px; }
.sheet-tabs .grip { margin-left: auto; }

.hscroll {
  display: flex;
  width: 279px;
  height: 20px;
  margin-left: 12px;
  background: #f3f3f3;
}

.hscroll button {
  width: 20px;
  border: 1px solid #999;
  background: #fff;
}

.hscroll i {
  width: 39px;
  margin-right: auto;
  border: 1px solid #999;
  border-width: 1px 0;
  background: #fff;
}

/* Status bar */
.status {
  flex: none;
  display: flex;
  align-items: center;
  height: 26px;
  padding: 0 9px 0 13px;
  border-bottom: 1px solid #cfdbe4;
  background: #f3f2f1;
}

.status > svg { margin: 0 5px 0 22px; }
.status strong { font-weight: 500; }

.views {
  display: flex;
  align-self: stretch;
  margin-left: auto;
}

.views button { width: 47px; }
.views .on { background: #d2d0ce; }

.views svg {
  fill: none;
  stroke: #444;
  stroke-width: 1.3;
}

.status input {
  appearance: none;
  width: 116px;
  height: 14px;
  margin: 0 9px 0 23px;
  background: linear-gradient(#555, #555) 50% 50% / 100% 1px no-repeat, linear-gradient(#555, #555) 50% 50% / 1px 6px no-repeat;
}

.status input::-webkit-slider-thumb {
  appearance: none;
  width: 6px;
  height: 14px;
  background: #444;
}

.plus {
  width: 1px;
  height: 8px;
  background: #777;
}

.zoom { margin-left: 18px; }

/* Message box */
.msgbox {
  position: absolute;
  left: 612px;
  top: 335px;
  width: 381px;
  margin: 0;
  padding: 0;
  border: none;
  background: #fff;
  box-shadow: 0 3px 12px rgba(0, 0, 0, 0.45);
  color: #000;
}

.msg-title {
  display: flex;
  align-items: center;
  justify-content: space-between;
  height: 34px;
  padding: 0 13px 0 10px;
}

.msgbox p {
  margin: 0;
  padding: 30px 14px 29px;
  font-size: 13px;
  line-height: 18px;
  white-space: nowrap;
}

.msg-foot {
  display: flex;
  justify-content: flex-end;
  height: 56px;
  padding: 11px 22px 0;
  background: #f0f0f0;
}

.ok {
  width: 96px;
  height: 30px;
  border: 2px solid #0078d7;
  outline: 1px dotted #000;
  outline-offset: -3px;
  background: #e1e1e1;
  font-size: 13px;
}
```
